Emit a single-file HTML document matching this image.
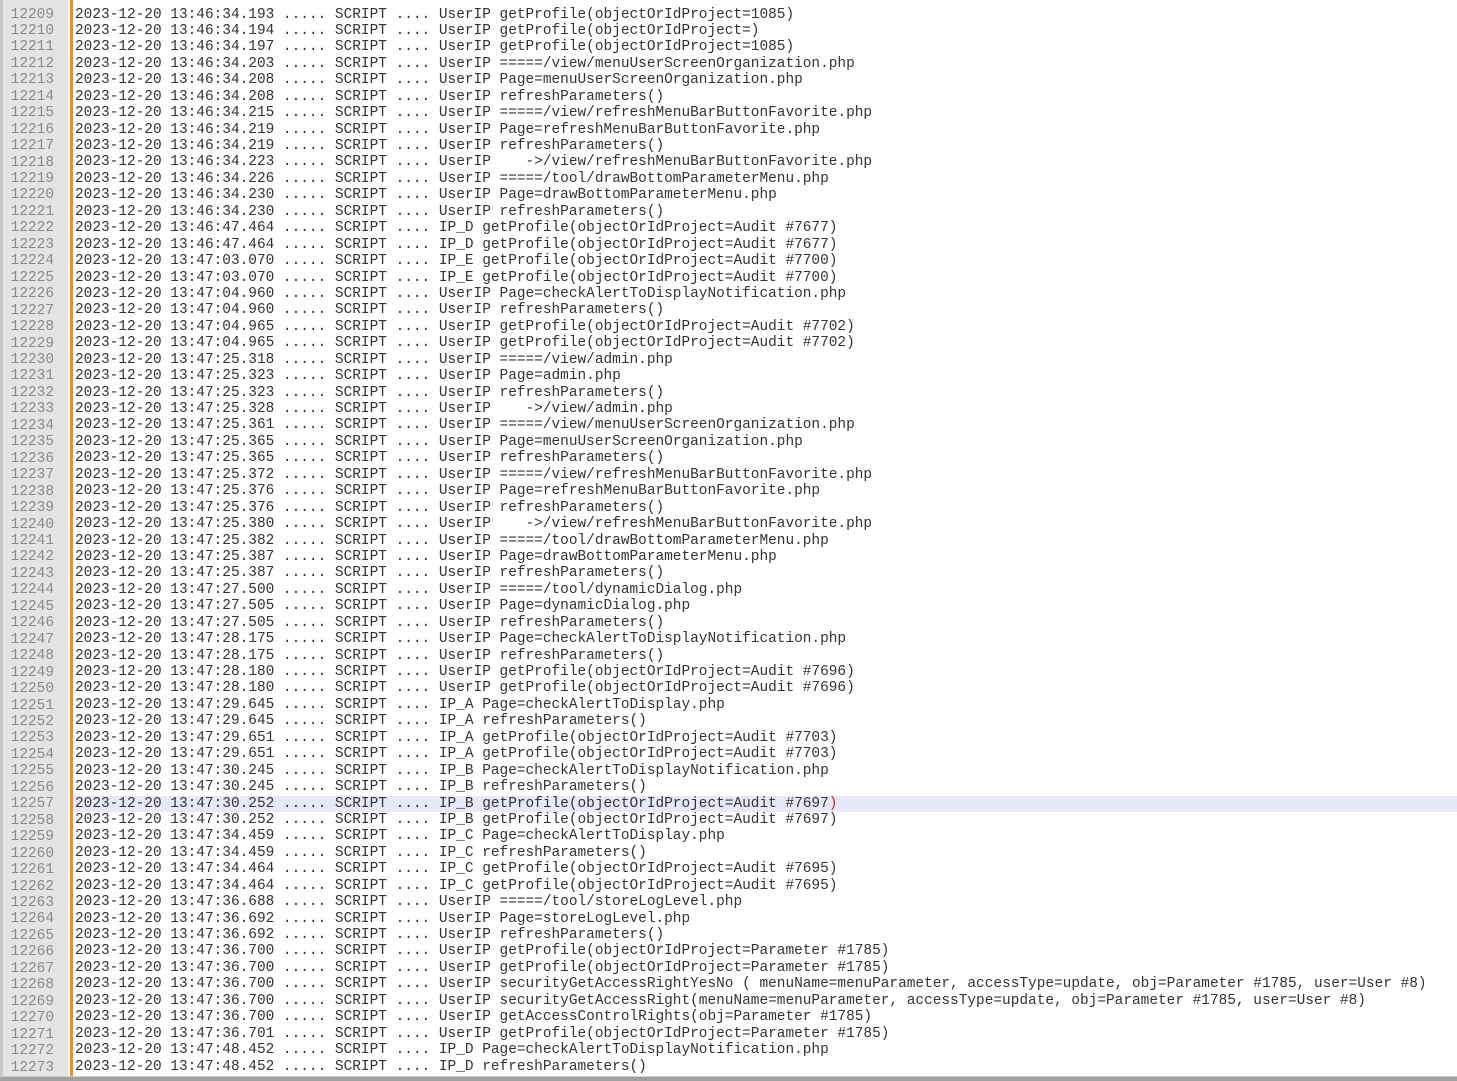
<!DOCTYPE html>
<html><head><meta charset="utf-8"><style>
html,body{margin:0;padding:0;width:1457px;height:1080px;overflow:hidden;background:#fff}
#gut{position:absolute;left:0;top:0;width:68px;height:1077px;background:#e4e4e4;border-left:3px solid #c8c8c8;box-sizing:border-box}
#orange{position:absolute;left:70px;top:0;width:3px;height:1077px;background:#ff8a1c}
#bot{position:absolute;left:0;top:1076px;width:1457px;height:4px;background:#a0a0a0;border-top:1px solid #d0d0d0}
.ln,.tx{position:absolute;font-family:"Liberation Mono",monospace;font-size:14.45px;line-height:16.45px;white-space:pre}
.ln{left:0;width:54px;text-align:right;color:#8a8a8a;top:6.5px}
.tx{left:75px;top:6.5px;color:#333;right:0}
.tx div{height:16.45px}
.hl{background:#e8e8fb;margin-left:-2px;padding-left:2px}
</style></head><body>
<div id="gut"></div><div id="orange"></div>
<div class="ln">12209
12210
12211
12212
12213
12214
12215
12216
12217
12218
12219
12220
12221
12222
12223
12224
12225
12226
12227
12228
12229
12230
12231
12232
12233
12234
12235
12236
12237
12238
12239
12240
12241
12242
12243
12244
12245
12246
12247
12248
12249
12250
12251
12252
12253
12254
12255
12256
12257
12258
12259
12260
12261
12262
12263
12264
12265
12266
12267
12268
12269
12270
12271
12272
12273</div>
<div class="tx"><div>2023-12-20 13:46:34.193 ..... SCRIPT .... UserIP getProfile(objectOrIdProject=1085)</div><div>2023-12-20 13:46:34.194 ..... SCRIPT .... UserIP getProfile(objectOrIdProject=)</div><div>2023-12-20 13:46:34.197 ..... SCRIPT .... UserIP getProfile(objectOrIdProject=1085)</div><div>2023-12-20 13:46:34.203 ..... SCRIPT .... UserIP =====/view/menuUserScreenOrganization.php</div><div>2023-12-20 13:46:34.208 ..... SCRIPT .... UserIP Page=menuUserScreenOrganization.php</div><div>2023-12-20 13:46:34.208 ..... SCRIPT .... UserIP refreshParameters()</div><div>2023-12-20 13:46:34.215 ..... SCRIPT .... UserIP =====/view/refreshMenuBarButtonFavorite.php</div><div>2023-12-20 13:46:34.219 ..... SCRIPT .... UserIP Page=refreshMenuBarButtonFavorite.php</div><div>2023-12-20 13:46:34.219 ..... SCRIPT .... UserIP refreshParameters()</div><div>2023-12-20 13:46:34.223 ..... SCRIPT .... UserIP    ->/view/refreshMenuBarButtonFavorite.php</div><div>2023-12-20 13:46:34.226 ..... SCRIPT .... UserIP =====/tool/drawBottomParameterMenu.php</div><div>2023-12-20 13:46:34.230 ..... SCRIPT .... UserIP Page=drawBottomParameterMenu.php</div><div>2023-12-20 13:46:34.230 ..... SCRIPT .... UserIP refreshParameters()</div><div>2023-12-20 13:46:47.464 ..... SCRIPT .... IP_D getProfile(objectOrIdProject=Audit #7677)</div><div>2023-12-20 13:46:47.464 ..... SCRIPT .... IP_D getProfile(objectOrIdProject=Audit #7677)</div><div>2023-12-20 13:47:03.070 ..... SCRIPT .... IP_E getProfile(objectOrIdProject=Audit #7700)</div><div>2023-12-20 13:47:03.070 ..... SCRIPT .... IP_E getProfile(objectOrIdProject=Audit #7700)</div><div>2023-12-20 13:47:04.960 ..... SCRIPT .... UserIP Page=checkAlertToDisplayNotification.php</div><div>2023-12-20 13:47:04.960 ..... SCRIPT .... UserIP refreshParameters()</div><div>2023-12-20 13:47:04.965 ..... SCRIPT .... UserIP getProfile(objectOrIdProject=Audit #7702)</div><div>2023-12-20 13:47:04.965 ..... SCRIPT .... UserIP getProfile(objectOrIdProject=Audit #7702)</div><div>2023-12-20 13:47:25.318 ..... SCRIPT .... UserIP =====/view/admin.php</div><div>2023-12-20 13:47:25.323 ..... SCRIPT .... UserIP Page=admin.php</div><div>2023-12-20 13:47:25.323 ..... SCRIPT .... UserIP refreshParameters()</div><div>2023-12-20 13:47:25.328 ..... SCRIPT .... UserIP    ->/view/admin.php</div><div>2023-12-20 13:47:25.361 ..... SCRIPT .... UserIP =====/view/menuUserScreenOrganization.php</div><div>2023-12-20 13:47:25.365 ..... SCRIPT .... UserIP Page=menuUserScreenOrganization.php</div><div>2023-12-20 13:47:25.365 ..... SCRIPT .... UserIP refreshParameters()</div><div>2023-12-20 13:47:25.372 ..... SCRIPT .... UserIP =====/view/refreshMenuBarButtonFavorite.php</div><div>2023-12-20 13:47:25.376 ..... SCRIPT .... UserIP Page=refreshMenuBarButtonFavorite.php</div><div>2023-12-20 13:47:25.376 ..... SCRIPT .... UserIP refreshParameters()</div><div>2023-12-20 13:47:25.380 ..... SCRIPT .... UserIP    ->/view/refreshMenuBarButtonFavorite.php</div><div>2023-12-20 13:47:25.382 ..... SCRIPT .... UserIP =====/tool/drawBottomParameterMenu.php</div><div>2023-12-20 13:47:25.387 ..... SCRIPT .... UserIP Page=drawBottomParameterMenu.php</div><div>2023-12-20 13:47:25.387 ..... SCRIPT .... UserIP refreshParameters()</div><div>2023-12-20 13:47:27.500 ..... SCRIPT .... UserIP =====/tool/dynamicDialog.php</div><div>2023-12-20 13:47:27.505 ..... SCRIPT .... UserIP Page=dynamicDialog.php</div><div>2023-12-20 13:47:27.505 ..... SCRIPT .... UserIP refreshParameters()</div><div>2023-12-20 13:47:28.175 ..... SCRIPT .... UserIP Page=checkAlertToDisplayNotification.php</div><div>2023-12-20 13:47:28.175 ..... SCRIPT .... UserIP refreshParameters()</div><div>2023-12-20 13:47:28.180 ..... SCRIPT .... UserIP getProfile(objectOrIdProject=Audit #7696)</div><div>2023-12-20 13:47:28.180 ..... SCRIPT .... UserIP getProfile(objectOrIdProject=Audit #7696)</div><div>2023-12-20 13:47:29.645 ..... SCRIPT .... IP_A Page=checkAlertToDisplay.php</div><div>2023-12-20 13:47:29.645 ..... SCRIPT .... IP_A refreshParameters()</div><div>2023-12-20 13:47:29.651 ..... SCRIPT .... IP_A getProfile(objectOrIdProject=Audit #7703)</div><div>2023-12-20 13:47:29.651 ..... SCRIPT .... IP_A getProfile(objectOrIdProject=Audit #7703)</div><div>2023-12-20 13:47:30.245 ..... SCRIPT .... IP_B Page=checkAlertToDisplayNotification.php</div><div>2023-12-20 13:47:30.245 ..... SCRIPT .... IP_B refreshParameters()</div><div class="hl">2023-12-20 13:47:30.252 ..... SCRIPT .... IP_B getProfile(objectOrIdProject=Audit #7697<span style="color:#e02020">)</span></div><div>2023-12-20 13:47:30.252 ..... SCRIPT .... IP_B getProfile(objectOrIdProject=Audit #7697)</div><div>2023-12-20 13:47:34.459 ..... SCRIPT .... IP_C Page=checkAlertToDisplay.php</div><div>2023-12-20 13:47:34.459 ..... SCRIPT .... IP_C refreshParameters()</div><div>2023-12-20 13:47:34.464 ..... SCRIPT .... IP_C getProfile(objectOrIdProject=Audit #7695)</div><div>2023-12-20 13:47:34.464 ..... SCRIPT .... IP_C getProfile(objectOrIdProject=Audit #7695)</div><div>2023-12-20 13:47:36.688 ..... SCRIPT .... UserIP =====/tool/storeLogLevel.php</div><div>2023-12-20 13:47:36.692 ..... SCRIPT .... UserIP Page=storeLogLevel.php</div><div>2023-12-20 13:47:36.692 ..... SCRIPT .... UserIP refreshParameters()</div><div>2023-12-20 13:47:36.700 ..... SCRIPT .... UserIP getProfile(objectOrIdProject=Parameter #1785)</div><div>2023-12-20 13:47:36.700 ..... SCRIPT .... UserIP getProfile(objectOrIdProject=Parameter #1785)</div><div>2023-12-20 13:47:36.700 ..... SCRIPT .... UserIP securityGetAccessRightYesNo ( menuName=menuParameter, accessType=update, obj=Parameter #1785, user=User #8)</div><div>2023-12-20 13:47:36.700 ..... SCRIPT .... UserIP securityGetAccessRight(menuName=menuParameter, accessType=update, obj=Parameter #1785, user=User #8)</div><div>2023-12-20 13:47:36.700 ..... SCRIPT .... UserIP getAccessControlRights(obj=Parameter #1785)</div><div>2023-12-20 13:47:36.701 ..... SCRIPT .... UserIP getProfile(objectOrIdProject=Parameter #1785)</div><div>2023-12-20 13:47:48.452 ..... SCRIPT .... IP_D Page=checkAlertToDisplayNotification.php</div><div>2023-12-20 13:47:48.452 ..... SCRIPT .... IP_D refreshParameters()</div></div>
<div id="bot"></div>
</body></html>
